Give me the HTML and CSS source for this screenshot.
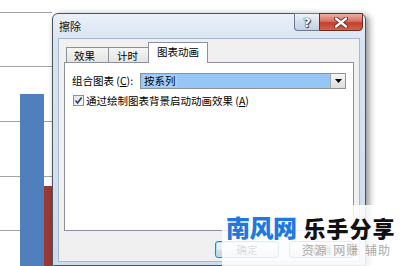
FILE: index.html
```html
<!DOCTYPE html>
<html>
<head>
<meta charset="utf-8">
<link rel="stylesheet" href="styles.css">
</head>
<body>
<div class="desk">
  <div class="chart">
    <div class="bar blue"></div>
    <div class="bar red"></div>
  </div>
  <div class="dialog">
    <div class="titlebar">
      <span class="title">擦除</span>
      <div class="caption-btns">
        <div class="cbtn help">?</div>
        <div class="cbtn close">
          <svg width="14" height="11" viewBox="0 0 14 11"><path d="M2 1.5 L12 9.5 M12 1.5 L2 9.5" stroke="#5a1a12" stroke-width="4" stroke-linecap="round"/><path d="M2 1.5 L12 9.5 M12 1.5 L2 9.5" stroke="#fff" stroke-width="2.4" stroke-linecap="round"/></svg>
        </div>
      </div>
    </div>
    <div class="client">
      <div class="tabs">
        <div class="tab">效果</div>
        <div class="tab t2">计时</div>
        <div class="tab active">图表动画</div>
      </div>
      <div class="panel">
        <div class="row">
          <span class="label">组合图表 (<u>C</u>):</span>
          <div class="combo"><span class="sel">按系列</span><div class="arrow"><svg width="7" height="4" viewBox="0 0 7 4"><path d="M0 0 H7 L3.5 4 Z" fill="#000"/></svg></div></div>
        </div>
        <div class="row check">
          <span class="box"><svg width="9" height="9" viewBox="0 0 9 9"><path d="M1.5 4.5 L3.6 7 L7.6 1.5" stroke="#2a3d73" stroke-width="1.6" fill="none"/></svg></span>
          <span>通过绘制图表背景启动动画效果 (<u>A</u>)</span>
        </div>
      </div>
      <div class="buttons">
        <div class="btn default">确定</div>
        <div class="btn">取消</div>
      </div>
    </div>
  </div>
  <div class="watermark">
    <div class="wm1"><span class="nf">南风网</span><span class="ls">乐手分享</span></div>
    <div class="wm2">资源 网赚 辅助</div>
  </div>
</div>
</body>
</html>
```
FILE: styles.css
```css
* { box-sizing: border-box; margin: 0; padding: 0; }
body {
  width: 400px; height: 266px; overflow: hidden; background: #fff;
  font-family: "Noto Sans CJK SC", "Liberation Sans", sans-serif;
  font-size: 10.5px; color: #000;
}
.desk { position: relative; width: 400px; height: 266px; }
.chart {
  width: 52px; height: 266px; display: flex; align-items: flex-end; padding-left: 20px;
  background:
    linear-gradient(#a3a3a3, #a3a3a3) 0 12px / 100% 1px no-repeat,
    linear-gradient(#a3a3a3, #a3a3a3) 0 66px / 100% 1px no-repeat,
    linear-gradient(#a3a3a3, #a3a3a3) 0 121px / 100% 1px no-repeat,
    linear-gradient(#a3a3a3, #a3a3a3) 0 176px / 100% 1px no-repeat,
    linear-gradient(#a3a3a3, #a3a3a3) 0 230px / 100% 1px no-repeat;
}
.bar { flex: none; }
.blue { width: 24px; height: 172px; background: #4f7fbd; }
.red { width: 8px; height: 80px; background: #9a3a35; }

.dialog {
  position: absolute; left: 52px; top: 13px; width: 314px; height: 253px;
  border: 1px solid #4e545c; border-radius: 6px 6px 0 0;
  background: linear-gradient(#eaf1f9, #d6e3f2 30px, #cddcee);
  box-shadow: 3px 2px 7px rgba(0,0,0,.45);
  padding: 0 5px 3px; display: flex; flex-direction: column;
}
.titlebar { height: 24px; flex: none; display: flex; justify-content: space-between; }
.title { font-size: 11px; line-height: 13px; margin-top: 6px; padding-left: 1px; color: #111; }
.caption-btns { display: flex; margin-top: -1px; margin-right: -3px; height: 18px; }
.cbtn { height: 18px; display: flex; align-items: center; justify-content: center; }
.help {
  width: 25px; border: 1px solid #6b7a8e; border-right: none; border-radius: 0 0 0 4px;
  background: linear-gradient(#eef3f9, #d4dfec 50%, #c3d1e3);
  color: #fff; font: bold 13px "DejaVu Sans", sans-serif;
  text-shadow: 0 0 1px #243b5c, 0 0 1px #243b5c, 1px 1px 1px #243b5c;
}
.close {
  width: 44px; border: 1px solid #6e2a20; border-radius: 0 0 4px 0;
  background: linear-gradient(#eab2a6, #d8705e 45%, #c2402c 55%, #d3624a);
}
.client {
  flex: 1; background: #f0f0f0; border: 1px solid #a9b9cd;
  padding: 3px 5px 0 5px; display: flex; flex-direction: column;
}
.tabs { height: 20px; flex: none; display: flex; align-items: flex-end; padding-left: 2px; }
.tab {
  height: 15px; width: 43px; border: 1px solid #8d9099; border-bottom: none;
  background: linear-gradient(#f5f5f5, #e4e4e4);
  display: flex; align-items: center; justify-content: center; line-height: 12px;
  padding-top: 1px; padding-right: 6px;
}
.t2 { width: 41px; margin-left: -1px; padding-right: 2px; }
.tab.active {
  height: 21px; width: 60px; margin-left: -1px; margin-bottom: -1px; background: #fff;
  position: relative; z-index: 1; padding: 0 0 2px 0;
}
.panel {
  height: 169px; flex: none; border: 1px solid #8d9099; background: #fff;
  padding: 10px 7px 0 7px;
}
.row { display: flex; align-items: center; }
.label { width: 68px; flex: none; line-height: 14px; }
.combo {
  width: 206px; height: 16px; border: 1px solid #8f949b; background: #95c6f6;
  display: flex; align-items: center; justify-content: space-between; padding-left: 2px;
}
.sel { line-height: 12px; background: #a6d0f9; padding: 0 1px; }
.arrow {
  width: 15px; height: 14px; border-left: 1px solid #a5a9ae;
  background: linear-gradient(#f6f6f6, #dcdcdc);
  display: flex; align-items: center; justify-content: center;
}
.check { margin-top: 5px; height: 12px; }
.box {
  width: 11px; height: 11px; margin-left: 1px; margin-right: 2px; border: 1px solid #8e8f8f;
  background: linear-gradient(135deg, #e4e4e4, #fafafa);
  display: flex; align-items: center; justify-content: center;
}
.buttons { display: flex; justify-content: flex-end; gap: 10px; margin-top: 10px; margin-right: 1px; }
.btn {
  width: 64px; height: 17px; border: 1px solid #707070; border-radius: 3px;
  background: linear-gradient(#f2f2f2, #ebebeb 50%, #dddddd 50%, #cfcfcf);
  display: flex; align-items: center; justify-content: center; line-height: 12px;
}
.btn.default { border-color: #3c7fb1; box-shadow: inset 0 0 0 1px #a9e0fb; }

.watermark {
  position: absolute; left: 222px; top: 205px; width: 178px; height: 61px;
  background: rgba(255,255,255,.86);
  padding: 10px 0 0 4px; display: flex; flex-direction: column;
}
.wm1 { display: flex; align-items: baseline; line-height: 24px; }
.nf { font-size: 24px; font-weight: 900; color: #1f78e0; letter-spacing: -0.5px; }
.ls { font-size: 22px; font-weight: 900; color: #111; margin-left: 7px; letter-spacing: 1px; }
.wm2 {
  align-self: flex-end; margin-right: 9px; margin-top: 4px;
  font-size: 12px; line-height: 13px; color: #aaa; letter-spacing: 1px; word-spacing: 2px;
}
```
